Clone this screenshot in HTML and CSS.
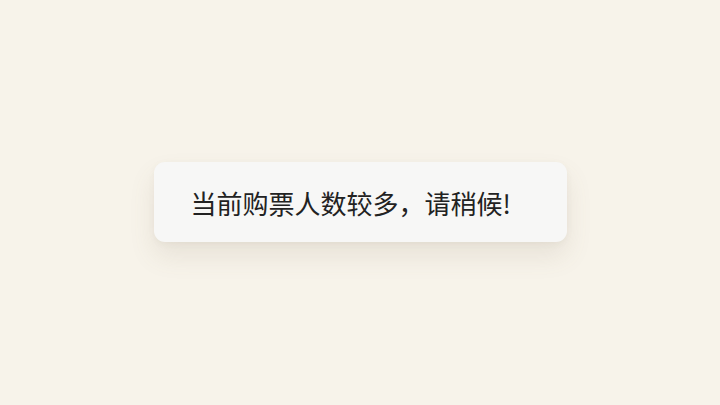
FILE: index.html
```html
<!DOCTYPE html>
<html lang="zh-CN">
<head>
<meta charset="utf-8">
<link rel="stylesheet" href="styles.css">
</head>
<body>
<div class="stage">
  <div class="toast">当前购票人数较多，请稍候!</div>
</div>
</body>
</html>
```
FILE: styles.css
```css
html, body {
  margin: 0;
  padding: 0;
}
body {
  background: #f7f3ea;
  width: 720px;
  height: 405px;
  overflow: hidden;
}
.stage {
  width: 720px;
  height: 405px;
  display: flex;
  align-items: center;
  justify-content: center;
}
.toast {
  box-sizing: border-box;
  width: 413px;
  height: 80px;
  margin-top: -1px;
  padding-left: 37px;
  display: flex;
  align-items: center;
  background: #f7f7f6;
  border-radius: 11px;
  box-shadow: 0 14px 26px rgba(120, 110, 80, 0.12), 0 2px 6px rgba(120, 110, 80, 0.06);
  font-family: "Noto Sans CJK SC", "Noto Sans", sans-serif;
  font-size: 26px;
  color: #222222;
}
```
